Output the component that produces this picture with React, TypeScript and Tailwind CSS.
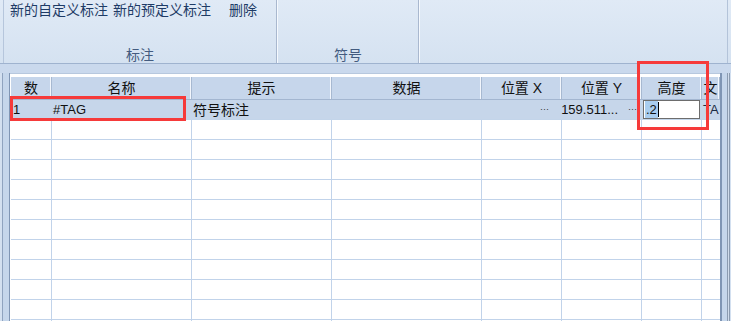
import React from 'react';

const font = { fontFamily: '"Liberation Sans", "Noto Sans CJK SC", sans-serif' };

const cols = [
  { key: 'no', title: '数', w: 'w-[41px]' },
  { key: 'name', title: '名称', w: 'w-[140px]' },
  { key: 'hint', title: '提示', w: 'w-[140px]' },
  { key: 'data', title: '数据', w: 'w-[150px]' },
  { key: 'x', title: '位置 X', w: 'w-[80px]' },
  { key: 'y', title: '位置 Y', w: 'w-[80px]' },
  { key: 'h', title: '高度', w: 'w-[60px]' },
  { key: 'txt', title: '文', w: 'flex-1' },
];

function Ribbon() {
  return (
    <div className="h-[64px] shrink-0 flex border-b border-[#9fb3cf] bg-gradient-to-b from-[#e0eaf6] to-[#d5e2f1] pl-[3px] pr-[3px]">
      {/* 标注 group */}
      <div className="w-[274px] flex flex-col border-l border-[#b6c6dc] border-r border-r-[#a9b8cf] shadow-[1px_0_0_#f5f9fe]">
        <div className="h-[19px] flex items-center text-[14px] leading-none text-[#1e3b66]">
          <span className="ml-[6px]">新的自定义标注</span>
          <span className="ml-[5px]">新的预定义标注</span>
          <span className="ml-[18px]">删除</span>
        </div>
        <div className="flex-1" />
        <div className="h-[19px] pt-[4px] flex items-start justify-center text-[14px] leading-none text-[#435b7f]">标注</div>
      </div>
      {/* 符号 group */}
      <div className="w-[141px] ml-[1px] flex flex-col border-r border-[#a9b8cf] shadow-[1px_0_0_#f5f9fe]">
        <div className="flex-1" />
        <div className="h-[19px] pt-[4px] flex items-start justify-center text-[14px] leading-none text-[#435b7f]">符号</div>
      </div>
      <div className="flex-1 ml-[1px] border-r border-[#b3c3d9]" />
    </div>
  );
}

function HeaderRow() {
  return (
    <div className="h-[23px] flex bg-[#c6d6eb] border-b border-[#a3b6d0]">
      {cols.map((c) => (
        <div
          key={c.key}
          className={`${c.w} shrink-0 flex items-center justify-center overflow-hidden whitespace-nowrap text-[14px] leading-none text-[#111] border-r border-[#a7b9d1] shadow-[inset_-1px_0_0_#f2f6fc]`}
        >
          {c.title}
        </div>
      ))}
    </div>
  );
}

function SelectedRow() {
  return (
    <div className="h-[20px] flex bg-[#c6d6ea] border-b border-[#c3d5ea] text-[#111]">
      <div className="w-[41px] shrink-0 flex items-center pl-[2px] text-[13px] leading-none">1</div>
      <div className="w-[140px] shrink-0 flex items-center pl-[1px] text-[13px] leading-none">#TAG</div>
      <div className="w-[140px] shrink-0 flex items-center pl-[1px] text-[14px] leading-none">符号标注</div>
      <div className="w-[150px] shrink-0" />
      <div className="w-[80px] shrink-0 flex items-center justify-end pr-[13px] text-[9px] leading-none text-[#333]">···</div>
      <div className="w-[80px] shrink-0 flex items-center justify-end pr-[5px] text-[13px] leading-none">
        <span>159.511...</span>
        <span className="ml-[10px] text-[9px] text-[#333]">···</span>
      </div>
      <div className="w-[60px] shrink-0 flex items-center pl-[1px]">
        <div className="w-[57px] h-[19px] bg-white border border-[#6d6d6d] flex items-center pl-[1px] text-[13px] leading-none">
          <span className="bg-[#a9cdef] px-[1px] py-[2px]">.2</span>
          <span className="w-[1px] h-[15px] bg-black" />
        </div>
      </div>
      <div className="flex-1 overflow-hidden whitespace-nowrap flex items-center pl-[1px] text-[13px] leading-none text-[#1b2a44]">TA</div>
    </div>
  );
}

function EmptyRow() {
  return (
    <div className="h-[20px] flex border-b border-[#c1d3ea]">
      {cols.map((c, i) => (
        <div
          key={c.key}
          className={`${c.w} shrink-0 ${i < cols.length - 1 ? 'border-r border-[#c1d3ea]' : ''}`}
        />
      ))}
    </div>
  );
}

export default function App() {
  return (
    <div className="relative w-[731px] h-[321px] overflow-hidden bg-[#c9d9ed] flex flex-col" style={font}>
      <Ribbon />
      <div className="h-[9px] shrink-0 bg-[#cad9ed]" />
      <div className="flex-1 flex min-h-0">
        {/* left frame */}
        <div className="w-[10px] shrink-0 flex">
          <div className="w-[3px] bg-[#d3e0f0] border-r border-[#8fa3bf]" />
          <div className="flex-1 bg-[#c5d6eb] border-r border-[#7f95b4]" />
        </div>
        {/* grid */}
        <div className="flex-1 bg-white pt-[3px] pl-[1px] overflow-hidden border-t border-[#b7c8de]">
          <HeaderRow />
          <SelectedRow />
          {Array.from({ length: 11 }).map((_, i) => (
            <EmptyRow key={i} />
          ))}
        </div>
        {/* right frame */}
        <div className="w-[11px] shrink-0 flex">
          <div className="w-[2px] bg-[#7f95b4]" />
          <div className="w-[5px] bg-[#c5d6eb]" />
          <div className="w-[1px] bg-[#8b9bb0]" />
          <div className="w-[1px] bg-[#d0dcec]" />
          <div className="w-[1px] bg-[#8b9bb0]" />
          <div className="flex-1 bg-[#d3e0f0]" />
        </div>
      </div>

      {/* red annotation boxes */}
      <div className="absolute left-[10px] top-[96px] w-[176px] h-[25px] border-[3px] border-[#f63a3a]" />
      <div className="absolute left-[637px] top-[61px] w-[72px] h-[69px] border-[3px] border-[#f63a3a]" />
    </div>
  );
}
